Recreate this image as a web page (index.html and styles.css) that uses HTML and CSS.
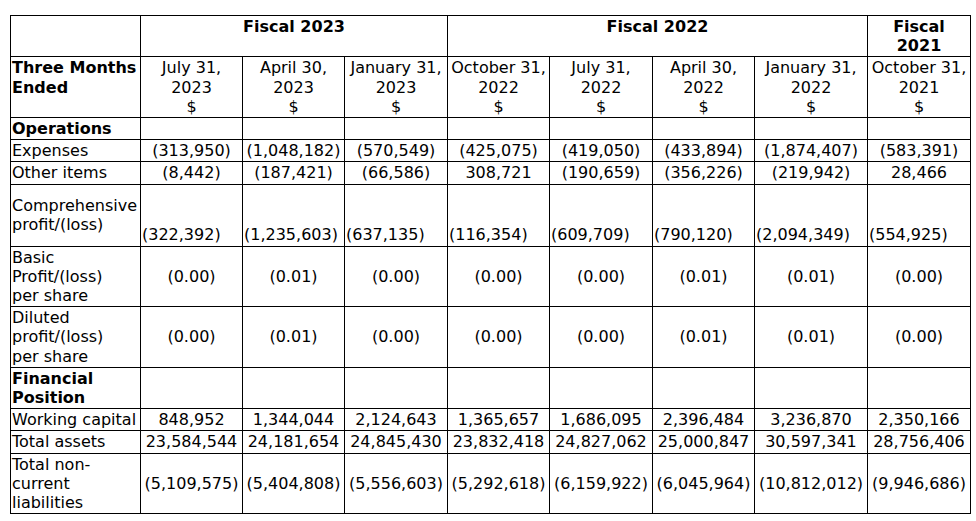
FILE: index.html
```html
<!DOCTYPE html>
<html>
<head>
<meta charset="utf-8">
<link rel="stylesheet" href="styles.css">
</head>
<body>
<div class="page">
<table class="fin">
  <colgroup>
    <col class="c-label">
    <col class="c-a"><col class="c-a"><col class="c-b"><col class="c-a"><col class="c-b"><col class="c-a"><col class="c-c"><col class="c-b">
  </colgroup>
  <tr class="fiscal">
    <td></td>
    <td colspan="3" class="hd">Fiscal 2023</td>
    <td colspan="4" class="hd">Fiscal 2022</td>
    <td class="hd">Fiscal 2021</td>
  </tr>
  <tr class="dates">
    <td class="lbl b">Three Months Ended</td>
    <td class="dt">July 31,<br>2023<br>$</td>
    <td class="dt">April 30,<br>2023<br>$</td>
    <td class="dt">January 31,<br>2023<br>$</td>
    <td class="dt">October 31,<br>2022<br>$</td>
    <td class="dt">July 31,<br>2022<br>$</td>
    <td class="dt">April 30,<br>2022<br>$</td>
    <td class="dt">January 31,<br>2022<br>$</td>
    <td class="dt">October 31,<br>2021<br>$</td>
  </tr>
  <tr>
    <td class="lbl b">Operations</td>
    <td></td><td></td><td></td><td></td><td></td><td></td><td></td><td></td>
  </tr>
  <tr>
    <td class="lbl">Expenses</td>
    <td class="v">(313,950)</td><td class="v">(1,048,182)</td><td class="v">(570,549)</td><td class="v">(425,075)</td><td class="v">(419,050)</td><td class="v">(433,894)</td><td class="v">(1,874,407)</td><td class="v">(583,391)</td>
  </tr>
  <tr>
    <td class="lbl">Other items</td>
    <td class="v">(8,442)</td><td class="v">(187,421)</td><td class="v">(66,586)</td><td class="v">308,721</td><td class="v">(190,659)</td><td class="v">(356,226)</td><td class="v">(219,942)</td><td class="v">28,466</td>
  </tr>
  <tr class="tall">
    <td class="lbl mid">Comprehensive profit/(loss)</td>
    <td class="vb">(322,392)</td><td class="vb">(1,235,603)</td><td class="vb">(637,135)</td><td class="vb">(116,354)</td><td class="vb">(609,709)</td><td class="vb">(790,120)</td><td class="vb">(2,094,349)</td><td class="vb">(554,925)</td>
  </tr>
  <tr>
    <td class="lbl">Basic<br>Profit/(loss)<br>per share</td>
    <td class="v">(0.00)</td><td class="v">(0.01)</td><td class="v">(0.00)</td><td class="v">(0.00)</td><td class="v">(0.00)</td><td class="v">(0.01)</td><td class="v">(0.01)</td><td class="v">(0.00)</td>
  </tr>
  <tr>
    <td class="lbl">Diluted<br>profit/(loss)<br>per share</td>
    <td class="v">(0.00)</td><td class="v">(0.01)</td><td class="v">(0.00)</td><td class="v">(0.00)</td><td class="v">(0.00)</td><td class="v">(0.01)</td><td class="v">(0.01)</td><td class="v">(0.00)</td>
  </tr>
  <tr>
    <td class="lbl b">Financial Position</td>
    <td></td><td></td><td></td><td></td><td></td><td></td><td></td><td></td>
  </tr>
  <tr>
    <td class="lbl">Working capital</td>
    <td class="v">848,952</td><td class="v">1,344,044</td><td class="v">2,124,643</td><td class="v">1,365,657</td><td class="v">1,686,095</td><td class="v">2,396,484</td><td class="v">3,236,870</td><td class="v">2,350,166</td>
  </tr>
  <tr>
    <td class="lbl">Total assets</td>
    <td class="v">23,584,544</td><td class="v">24,181,654</td><td class="v">24,845,430</td><td class="v">23,832,418</td><td class="v">24,827,062</td><td class="v">25,000,847</td><td class="v">30,597,341</td><td class="v">28,756,406</td>
  </tr>
  <tr>
    <td class="lbl">Total non-<br>current<br>liabilities</td>
    <td class="v">(5,109,575)</td><td class="v">(5,404,808)</td><td class="v">(5,556,603)</td><td class="v">(5,292,618)</td><td class="v">(6,159,922)</td><td class="v">(6,045,964)</td><td class="v">(10,812,012)</td><td class="v">(9,946,686)</td>
  </tr>
</table>
</div>
</body>
</html>
```

FILE: styles.css
```css
html, body {
  margin: 0;
  padding: 0;
  background: #ffffff;
}

.page {
  padding: 15px 0 0 10px;
}

.fin {
  border-collapse: collapse;
  table-layout: fixed;
  width: 960px;
  font-family: "DejaVu Sans", Verdana, sans-serif;
  font-size: 16px;
  line-height: 19.2px;
  color: #000000;
}

.c-label { width: 130px; }
.c-a { width: 102px; }
.c-b { width: 103px; }
.c-c { width: 113px; }

.fin td {
  border: 1px solid #000000;
  padding: 1px 1px;
  vertical-align: top;
  white-space: normal;
}

.fin .hd {
  font-weight: bold;
  text-align: center;
}

.fin .dt {
  text-align: center;
  white-space: nowrap;
}

.fin .lbl {
  text-align: left;
}

.fin .b {
  font-weight: bold;
}

.fin .mid {
  vertical-align: middle;
}

.fin .v {
  text-align: center;
  vertical-align: middle;
  white-space: nowrap;
}

.fin .vb {
  text-align: left;
  vertical-align: bottom;
  white-space: nowrap;
}

.tall td {
  height: 59px;
}
```
